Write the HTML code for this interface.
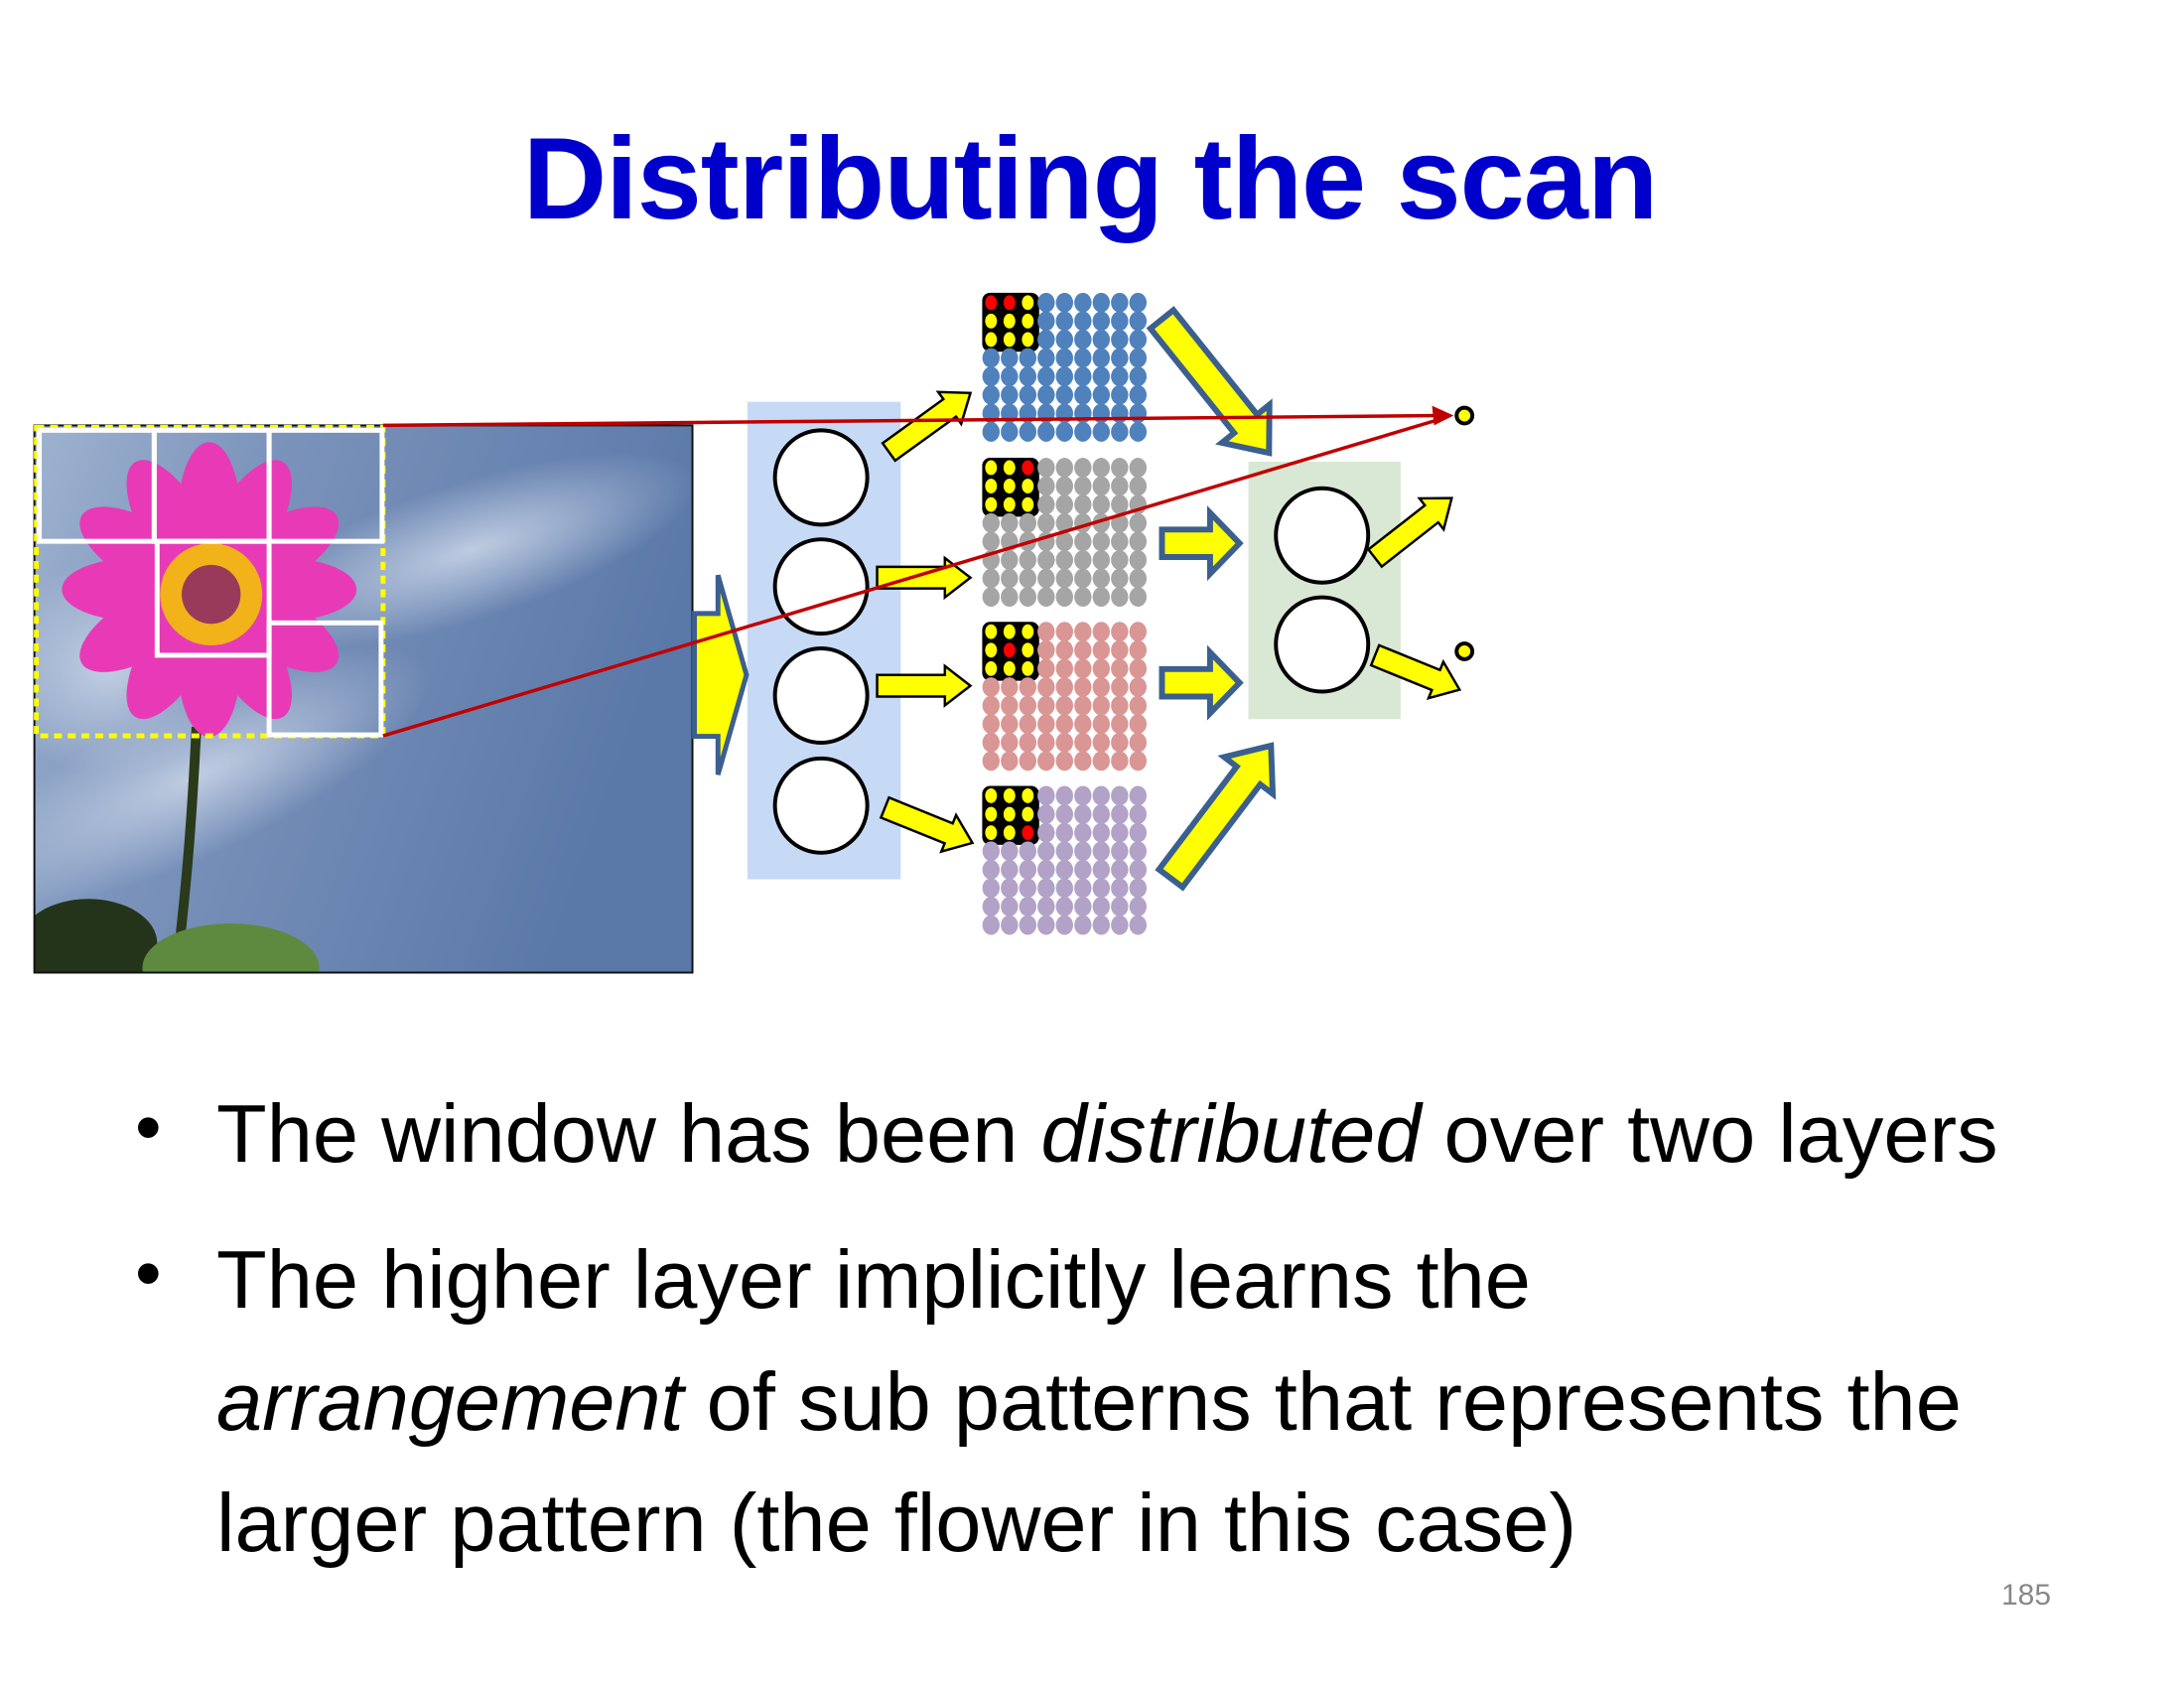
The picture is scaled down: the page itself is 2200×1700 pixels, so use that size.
<!DOCTYPE html>
<html><head><meta charset="utf-8"><style>
html,body{margin:0;padding:0;background:#fff;}
body{width:2200px;height:1700px;position:relative;overflow:hidden;font-family:"Liberation Sans",sans-serif;}
.title{position:absolute;left:0;width:2196px;top:112px;text-align:center;font-weight:bold;font-size:117px;color:#0000cc;letter-spacing:-1px;}
.b{position:absolute;left:218px;font-size:83px;color:#000;line-height:83px;}
.dot{position:absolute;left:136px;font-size:76px;}
.pn{position:absolute;left:2016px;top:1590px;font-size:30px;color:#888;}
svg{position:absolute;left:0;top:0;}
</style></head><body>
<div class="title">Distributing the scan</div>
<svg width="2200" height="1700" viewBox="0 0 2200 1700">
<defs>
<linearGradient id="sky" x1="0" y1="0" x2="1" y2="0.3">
<stop offset="0" stop-color="#9fb3d0"/><stop offset="0.35" stop-color="#7b93bb"/><stop offset="1" stop-color="#5a78a8"/></linearGradient>
<radialGradient id="wisp" cx="0.5" cy="0.5" r="0.5"><stop offset="0" stop-color="#c8d3e6" stop-opacity="0.9"/><stop offset="1" stop-color="#c8d3e6" stop-opacity="0"/></radialGradient>
<clipPath id="pc"><rect x="35" y="433" width="670" height="557"/></clipPath>
</defs>
<g transform="scale(0.9894)">
<g clip-path="url(#pc)">
<rect x="35" y="433" width="670" height="557" fill="url(#sky)"/>
<ellipse cx="480" cy="560" rx="240" ry="70" fill="url(#wisp)" transform="rotate(-18 480 560)"/>
<ellipse cx="200" cy="790" rx="260" ry="80" fill="url(#wisp)" transform="rotate(-25 200 790)"/>
<ellipse cx="110" cy="680" rx="120" ry="110" fill="url(#wisp)"/>
<path d="M200 740 C195 840 190 900 180 985" stroke="#2a3a1a" stroke-width="10" fill="none"/>
<path d="M35 945 C80 930 120 940 150 980 L150 990 L35 990Z" fill="#1e2a14"/>
<ellipse cx="90" cy="960" rx="70" ry="45" fill="#24341a"/>
<ellipse cx="235" cy="985" rx="90" ry="45" fill="#5d8a3e"/>
<g fill="#e83ab6">
<ellipse cx="213" cy="525" rx="32" ry="75"/>
<ellipse cx="213" cy="525" rx="32" ry="75" transform="rotate(30 213 600)"/>
<ellipse cx="213" cy="525" rx="32" ry="75" transform="rotate(60 213 600)"/>
<ellipse cx="213" cy="525" rx="32" ry="75" transform="rotate(90 213 600)"/>
<ellipse cx="213" cy="525" rx="32" ry="75" transform="rotate(120 213 600)"/>
<ellipse cx="213" cy="525" rx="32" ry="75" transform="rotate(150 213 600)"/>
<ellipse cx="213" cy="525" rx="32" ry="75" transform="rotate(180 213 600)"/>
<ellipse cx="213" cy="525" rx="32" ry="75" transform="rotate(210 213 600)"/>
<ellipse cx="213" cy="525" rx="32" ry="75" transform="rotate(240 213 600)"/>
<ellipse cx="213" cy="525" rx="32" ry="75" transform="rotate(270 213 600)"/>
<ellipse cx="213" cy="525" rx="32" ry="75" transform="rotate(300 213 600)"/>
<ellipse cx="213" cy="525" rx="32" ry="75" transform="rotate(330 213 600)"/>
<circle cx="213" cy="600" r="80"/>
</g>
<circle cx="215" cy="605" r="52" fill="#f2b21a"/>
<circle cx="215" cy="605" r="30" fill="#9a3a5a"/>
</g>
<rect x="35" y="433" width="670" height="557" fill="none" stroke="#111" stroke-width="2"/>
<rect x="37" y="435" width="353" height="314" fill="none" stroke="#ffff00" stroke-width="5" stroke-dasharray="8 6"/>
<g fill="none" stroke="#fff" stroke-width="5">
<rect x="40" y="438" width="117" height="113"/><rect x="157" y="438" width="117" height="113"/><rect x="274" y="438" width="115" height="113"/>
<rect x="160" y="551" width="114" height="116"/><rect x="274" y="634" width="114" height="114"/>
</g>
<rect x="761" y="409" width="156" height="486" fill="#c6d9f5"/>
<rect x="1271" y="470" width="155" height="262" fill="#d9e8d4"/>
<g id="dots"></g>
<g id="arrows" fill="#ffff00" stroke="#000" stroke-width="2.5"></g>
<g fill="#fff" stroke="#000" stroke-width="4">
<ellipse cx="836" cy="486" rx="47" ry="48"/><ellipse cx="836" cy="597" rx="47" ry="48"/>
<ellipse cx="836" cy="708" rx="47" ry="48"/><ellipse cx="836" cy="820" rx="47" ry="48"/>
<ellipse cx="1346" cy="545" rx="47" ry="48"/><ellipse cx="1346" cy="656" rx="47" ry="48"/>
</g>
<g stroke="#c00000" stroke-width="3.5" fill="none">
<line x1="390" y1="433" x2="1465" y2="423"/>
<line x1="390" y1="749" x2="1465" y2="427"/>
</g>
<polygon points="1480,423 1458,413 1460,433" fill="#c00000"/>
<circle cx="1491" cy="423" r="8" fill="#ffff00" stroke="#000" stroke-width="4"/>
<circle cx="1491" cy="663" r="8" fill="#ffff00" stroke="#000" stroke-width="4"/>
</g>
</svg>
<div class="dot" style="top:1092px">•</div>
<div class="b" style="top:1100px">The window has been <i>distributed</i> over two layers</div>
<div class="dot" style="top:1239px">•</div>
<div class="b" style="top:1247px">The higher layer implicitly learns the</div>
<div class="b" style="top:1370px"><i>arrangement</i> of sub patterns that represents the</div>
<div class="b" style="top:1492px">larger pattern (the flower in this case)</div>
<div class="pn">185</div>
<script>
var NS="http://www.w3.org/2000/svg";
var dots=document.getElementById('dots');
function el(t,a,p){var e=document.createElementNS(NS,t);for(var k in a)e.setAttribute(k,a[k]);p.appendChild(e);return e;}
var grids=[[308,'#4f81bd',[0,1]],[476,'#a5a5a5',[2]],[643,'#d99694',[4]],[810,'#b3a2c7',[8]]];
grids.forEach(function(g){
 var y0=g[0];
 el('rect',{x:1000,y:y0-10,width:58,height:60,rx:8,fill:'#000'},dots);
 for(var r=0;r<8;r++)for(var c=0;c<9;c++){
  var cx=1009+c*18.7,cy=y0+r*18.8;
  if(r<3&&c<3){var red=g[2].indexOf(r*3+c)>=0;
   el('ellipse',{cx:cx,cy:cy,rx:6,ry:7.5,fill:red?'#ff0000':'#ffff00'},dots);}
  else el('ellipse',{cx:cx,cy:cy,rx:8.8,ry:10,fill:g[1]},dots);
 }
});
var ag=document.getElementById('arrows');
function arrow(x1,y1,x2,y2,w,hw,hl,stroke,sw){
 var dx=x2-x1,dy=y2-y1,L=Math.sqrt(dx*dx+dy*dy),ux=dx/L,uy=dy/L,nx=-uy,ny=ux;
 var bx=x2-ux*hl,by=y2-uy*hl;
 var p=[[x1+nx*w/2,y1+ny*w/2],[bx+nx*w/2,by+ny*w/2],[bx+nx*hw/2,by+ny*hw/2],[x2,y2],[bx-nx*hw/2,by-ny*hw/2],[bx-nx*w/2,by-ny*w/2],[x1-nx*w/2,y1-ny*w/2]];
 var a={points:p.map(function(q){return q[0].toFixed(1)+','+q[1].toFixed(1)}).join(' ')};
 if(stroke){a.stroke=stroke;a['stroke-width']=sw;}
 el('polygon',a,ag);
}
arrow(905,460,988,400,22,40,26);
arrow(893,588,988,588,22,40,26);
arrow(893,698,988,698,22,40,26);
arrow(901,822,990,858,22,40,26);
arrow(1400,568,1478,507,22,40,26);
arrow(1400,667,1486,702,22,40,26);
arrow(1183,553,1262,553,28,62,30,'#3b5f8f',6);
arrow(1183,695,1262,695,28,62,30,'#3b5f8f',6);
arrow(1183,325,1292,461,30,62,38,'#3b5f8f',6);
arrow(1192,894,1294,759,30,62,38,'#3b5f8f',6);
arrow(707,687,760,687,125,203,29,'#3b5f8f',5);
</script>
</body></html>
